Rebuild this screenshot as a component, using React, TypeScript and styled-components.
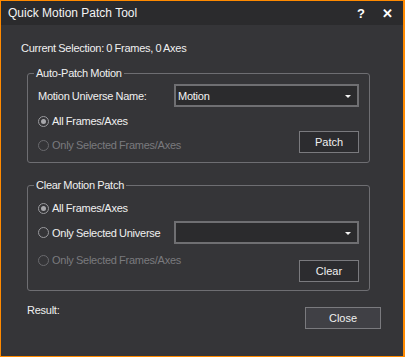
import styled, { createGlobalStyle } from 'styled-components';

const GlobalStyle = createGlobalStyle`
  html, body {
    margin: 0;
    padding: 0;
    background: #353538;
  }
  body {
    font-family: "Liberation Sans", Arial, sans-serif;
  }
`;

const Window = styled.div`
  box-sizing: border-box;
  width: 405px;
  height: 357px;
  border: 1px solid #ff8a00;
  border-right-width: 2px;
  background: #353538;
  display: flex;
  flex-direction: column;
  color: #f0f0f0;
  font-size: 11px;
  letter-spacing: -0.25px;
  word-spacing: -0.5px;
`;

const TitleBar = styled.div`
  height: 24px;
  background: #2b2b2d;
  display: flex;
  align-items: center;
  padding: 0 3px 0 7px;
  letter-spacing: 0;
  word-spacing: 0;
`;

const Title = styled.span`
  flex: 1;
  font-size: 12px;
  color: #f4f4f4;
`;

const TitleIcon = styled.span`
  font-size: 13px;
  font-weight: bold;
  width: 26px;
  text-align: center;
  color: #ffffff;
`;

const Body = styled.div`
  flex: 1;
  padding: 16px 22px 0 20px;
  display: flex;
  flex-direction: column;
`;

const TextLine = styled.div`
  line-height: 14px;
  height: 14px;
  white-space: nowrap;
`;

const Group = styled.fieldset<{ $top: number }>`
  margin: ${(p) => p.$top}px 11px 0 6px;
  padding: 0 10px 0 10px;
  border: 1px solid #6e6e72;
  border-radius: 3px;
  min-width: 0;
  display: flex;
  flex-direction: column;
`;

const Legend = styled.legend`
  padding: 0 2px;
  margin-left: -4px;
  line-height: 14px;
  color: #f0f0f0;
`;

const Row = styled.div<{ $gap: number; $align?: string }>`
  display: flex;
  align-items: ${(p) => p.$align || 'center'};
  justify-content: space-between;
  margin-top: ${(p) => p.$gap}px;
`;

const Select = styled.div`
  box-sizing: border-box;
  width: 185px;
  height: 23px;
  border: 2px solid #6f6f72;
  background: #2b2b2d;
  display: flex;
  align-items: center;
  padding: 0 0 0 2px;
  color: #f4f4f4;
`;

const SelectValue = styled.span`
  flex: 1;
`;

const SelectArrow = styled.span`
  width: 18px;
  height: 19px;
  display: flex;
  align-items: center;
  justify-content: center;
  &::after {
    content: '';
    border-left: 3px solid transparent;
    border-right: 3px solid transparent;
    border-top: 3px solid #f4f4f4;
    margin-top: 2px;
  }
`;

const RadioLabel = styled.label<{ $disabled?: boolean }>`
  display: flex;
  align-items: center;
  height: 16px;
  gap: 3px;
  color: ${(p) => (p.$disabled ? '#7a7a7e' : '#f0f0f0')};
  white-space: nowrap;
`;

const RadioDot = styled.span<{ $checked?: boolean; $disabled?: boolean }>`
  box-sizing: border-box;
  width: 11px;
  height: 11px;
  border-radius: 50%;
  border: 1px solid ${(p) => (p.$disabled ? '#6a6a6e' : '#9a9a9e')};
  background: #353538;
  display: flex;
  align-items: center;
  justify-content: center;
  &::after {
    content: '';
    display: ${(p) => (p.$checked ? 'block' : 'none')};
    width: 5px;
    height: 5px;
    border-radius: 50%;
    background: #a8a8ac;
  }
`;

const Button = styled.button<{ $light?: boolean; $width: number }>`
  box-sizing: border-box;
  width: ${(p) => p.$width}px;
  height: 22px;
  border: 1px solid #7a7a7e;
  background: ${(p) => (p.$light ? '#404045' : '#2c2c2f')};
  color: #f0f0f0;
  font-family: inherit;
  font-size: 11px;
  padding: 0;
`;

const Footer = styled.div`
  display: flex;
  justify-content: space-between;
  align-items: flex-start;
  margin-top: 12px;
  padding-left: 6px;
`;

function Radio({ label, checked, disabled }: { label: string; checked?: boolean; disabled?: boolean }) {
  return (
    <RadioLabel $disabled={disabled}>
      <RadioDot $checked={checked} $disabled={disabled} />
      {label}
    </RadioLabel>
  );
}

export default function App() {
  return (
    <>
      <GlobalStyle />
      <Window>
        <TitleBar>
          <Title>Quick Motion Patch Tool</Title>
          <TitleIcon>?</TitleIcon>
          <TitleIcon>✕</TitleIcon>
        </TitleBar>
        <Body>
          <TextLine>Current Selection: 0 Frames, 0 Axes</TextLine>
          <Group $top={11}>
            <Legend>Auto-Patch Motion</Legend>
            <Row $gap={4}>
              <span>Motion Universe Name:</span>
              <Select>
                <SelectValue>Motion</SelectValue>
                <SelectArrow />
              </Select>
            </Row>
            <Row $gap={6}>
              <Radio label="All Frames/Axes" checked />
            </Row>
            <Row $gap={2} $align="flex-end">
              <Radio label="Only Selected Frames/Axes" disabled />
              <Button $width={60}>Patch</Button>
            </Row>
            <Row $gap={9} />
          </Group>
          <Group $top={15}>
            <Legend>Clear Motion Patch</Legend>
            <Row $gap={8}>
              <Radio label="All Frames/Axes" checked />
            </Row>
            <Row $gap={5}>
              <Radio label="Only Selected Universe" />
              <Select>
                <SelectValue />
                <SelectArrow />
              </Select>
            </Row>
            <Row $gap={8} $align="flex-start">
              <Radio label="Only Selected Frames/Axes" disabled />
              <Button $width={60} style={{ marginTop: 8 }}>Clear</Button>
            </Row>
            <Row $gap={8} />
          </Group>
          <Footer>
            <TextLine>Result:</TextLine>
            <Button $light $width={76} style={{ marginTop: 4 }}>Close</Button>
          </Footer>
        </Body>
      </Window>
    </>
  );
}
